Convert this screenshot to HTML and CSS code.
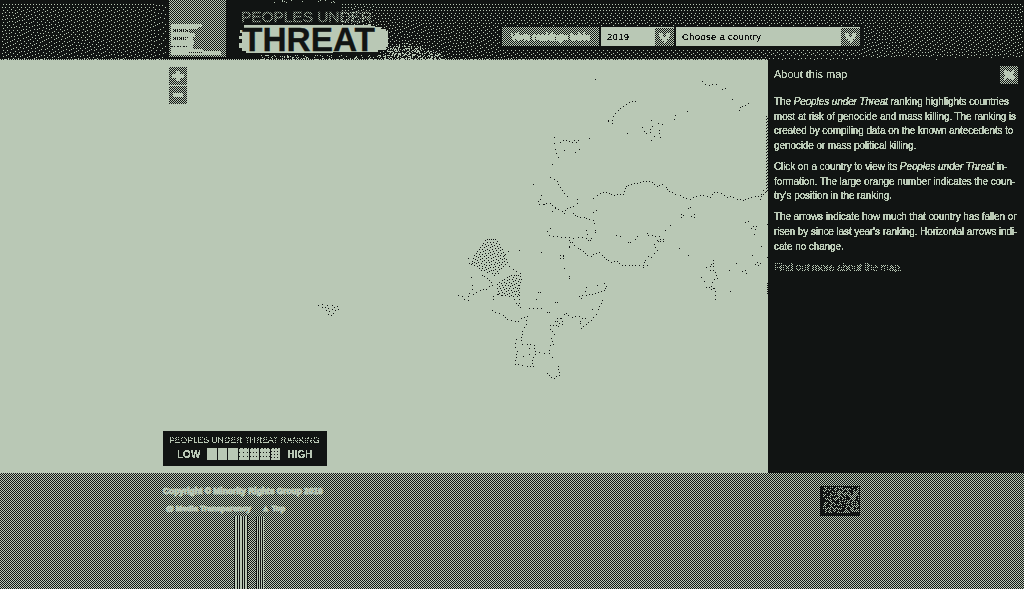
FILE: index.html
```html
<!DOCTYPE html>
<html lang="en">
<head>
<meta charset="utf-8">
<title>Peoples under Threat</title>
<link rel="stylesheet" href="styles.css">
</head>
<body>
<svg class="defs" width="0" height="0" aria-hidden="true">
  <filter id="onebit" x="0" y="0" width="100%" height="100%" color-interpolation-filters="sRGB">
    <feComponentTransfer><feFuncA type="discrete" tableValues="0 0 1 1 1"/></feComponentTransfer>
  </filter>
</svg>
<header class="header">
  <svg class="texture" width="1024" height="60" viewBox="0 0 1024 60" shape-rendering="crispEdges"><path id="grain" class="paper"/></svg>
  <div class="mrg">
    <svg width="57" height="57" viewBox="0 0 57 57" shape-rendering="crispEdges">
      <path class="paper" d="M2 24h31v3h-4v2H2zM2 33h24v4H2zM2 41h23v4H2zM2 49h32v2h18v4H2z"/>
      <path class="paper" d="M2 29h18v4H2zM2 37h22v4H2zM2 45h22v4H2z"/>
      <path class="inkline" d="M4 29.500h14M4 31.500h18M4 37.500h16M4 39.500h14M20 52.500h14" stroke-dasharray="1 1"/>
      <path class="inkline" d="M5 30.500h14M5 38.500h12M2 46.500h16" stroke-dasharray="2 1 1 2"/>
    </svg>
  </div>
  <div class="brand">
    <svg width="225" height="60" viewBox="0 0 225 60">
      <g id="spray"></g>
      <g class="sparse"><text class="peoples" x="15" y="22" textLength="131" lengthAdjust="spacing">PEOPLES UNDER</text></g>
      <path class="paper" shape-rendering="crispEdges" d="M18 25h124v-1h3v2h4v1h6v2h5v2h2v16h-2v3h-8v2h-45v1H20v-2h-4v-3h-3v-5h3v-4h-3v-3h3v-3h-2v-3h4z"/>
      <text class="threat" x="16" y="51" textLength="133" lengthAdjust="spacingAndGlyphs">THREAT</text>
    </svg>
  </div>
  <div class="tools">
    <div class="view"><span class="bit">View rankings table</span></div>
    <div class="select year"><span class="bit">2019</span><svg class="arrow" width="19" height="18" viewBox="0 0 19 18"><path class="paper" shape-rendering="crispEdges" d="M4 5h3v1h1v2h1v1h1V8h1V6h1V5h3v4h-1v2h-2v2h-1v2H9v-2H7v-2H5V9H4z"/></svg></div>
    <div class="select country"><span class="bit">Choose a country</span><svg class="arrow" width="19" height="18" viewBox="0 0 19 18"><path class="paper" shape-rendering="crispEdges" d="M4 5h3v1h1v2h1v1h1V8h1V6h1V5h3v4h-1v2h-2v2h-1v2H9v-2H7v-2H5V9H4z"/></svg></div>
  </div>
</header>
<main class="main">
  <section class="map">
    <svg id="land" class="land" width="768" height="413" viewBox="0 60 768 413" shape-rendering="crispEdges"></svg>
    <div class="zoom">
      <button class="zbtn" aria-label="Zoom in"><svg width="18" height="18" viewBox="0 0 18 18" shape-rendering="crispEdges"><path class="paper" d="M7 4h4v3h4v4h-4v3H7v-3H3V7h4z"/></svg></button>
      <button class="zbtn" aria-label="Zoom out"><svg width="18" height="18" viewBox="0 0 18 18" shape-rendering="crispEdges"><path class="paper" d="M4 7h10v4H4z"/></svg></button>
    </div>
    <div class="legend">
      <div class="legend-title"><span class="bit">PEOPLES UNDER THREAT RANKING</span></div>
      <div class="scale"><span class="bit">LOW</span><div class="ramp"><i class="r1"></i><i class="r2"></i><i class="r3"></i><i class="r4"></i><i class="r5"></i><i class="r6"></i><i class="r7"></i></div><span class="bit">HIGH</span></div>
    </div>
  </section>
  <aside class="about">
    <div class="about-head"><h2 class="bit">About this map</h2><button class="close" aria-label="Close"><svg width="18" height="18" viewBox="0 0 18 18" shape-rendering="crispEdges"><path class="paper" d="M4 4h3v1h2v1h2V5h1V4h2v3h-1v2h1v2h1v2h-1v1h-3v-1H9v-1H7v1H6v1H4v-3h1V9H4z"/></svg></button></div>
    <p class="bit">The <em>Peoples under Threat</em> ranking highlights countries<br>most at risk of genocide and mass killing. The ranking is<br>created by compiling data on the known antecedents to<br>genocide or mass political killing.</p>
    <p class="bit">Click on a country to view its <em>Peoples under Threat</em> in-<br>formation. The large orange number indicates the coun-<br>try's position in the ranking.</p>
    <p class="bit">The arrows indicate how much that country has fallen or<br>risen by since last year's ranking. Horizontal arrows indi-<br>cate no change.</p>
    <p class="bit sparse"><a>Find out more about the map.</a></p>
  </aside>
</main>
<footer class="footer">
  <div class="credits">
    <div class="copy">Copyright © Minority Rights Group 2019</div>
    <div class="links"><span>@ Media Transparency</span><span>▲ Top</span></div>
    <div class="bands"><i class="band wide"></i><i class="band narrow"></i></div>
  </div>
  <svg class="partner" width="40" height="30" viewBox="0 0 40 30" shape-rendering="crispEdges"><rect class="ink" width="40" height="30"/><path id="noise" class="paper"/></svg>
</footer>
<script src="map.js"></script>
</body>
</html>
```
FILE: styles.css
```css
:root { --ink: #111413; --paper: #b9c8b5; --check: repeating-conic-gradient(var(--ink) 0 25%, var(--paper) 0 50%) 0 0 / 2px 2px; }
* { box-sizing: border-box; }
body { margin: 0; width: 1024px; height: 589px; overflow: hidden; display: flex; flex-direction: column; background: var(--ink); color: var(--paper); font: 10px "Liberation Sans", Arial, sans-serif; }
.defs { position: absolute; }
.ink { fill: var(--ink); }
.paper { fill: var(--paper); }
.inkline { stroke: var(--ink); fill: none; }
.bit { filter: url(#onebit); }
.sparse { -webkit-mask: repeating-conic-gradient(#000 0 25%, transparent 0 50%) 0 0 / 2px 2px; mask: repeating-conic-gradient(#000 0 25%, transparent 0 50%) 0 0 / 2px 2px; }
svg { display: block; }
button { border: 0; padding: 0; }
.header { height: 60px; display: flex; padding-left: 169px; position: relative; }
.texture { position: absolute; left: 0; top: 0; }
.mrg, .brand, .tools { position: relative; }
.mrg { width: 57px; height: 57px; background: var(--check); }
.brand { width: 225px; height: 60px; }
.peoples { font-size: 15.500px; fill: var(--paper); stroke: var(--paper); stroke-width: .4; }
.threat { font-size: 33px; font-weight: bold; fill: var(--ink); stroke: var(--ink); stroke-width: .3; }
.tools { display: flex; align-items: center; margin: 27px 0 0 51px; height: 19px; gap: 2px; }
.view { width: 97px; height: 19px; background: var(--check); font-size: 8.500px; font-weight: bold; display: flex; align-items: center; justify-content: center; white-space: nowrap; -webkit-text-stroke: 1px var(--paper); }
.select { height: 19px; background: var(--paper); color: var(--ink); display: flex; align-items: center; justify-content: space-between; padding-left: 6px; font-size: 9.500px; letter-spacing: .3px; }
.year { width: 73px; }
.country { width: 184px; }
.arrow { background: var(--check); }
.main { height: 413px; display: flex; }
.map { width: 768px; position: relative; background: var(--paper); }
.land { position: absolute; left: 0; top: 0; }
.zoom { position: absolute; left: 169px; top: 7px; display: flex; flex-direction: column; gap: 1px; }
.zbtn, .close { width: 18px; height: 18px; background: var(--check); }
.legend { position: absolute; left: 163px; top: 371px; width: 164px; height: 35px; background: var(--ink); padding: 4px 6px; }
.legend-title { font-size: 8.500px; line-height: 10px; white-space: nowrap; letter-spacing: .07px; }
.legend-title span { -webkit-mask: repeating-conic-gradient(#000 0 25%, #000 0 50%, transparent 0 75%, #000 0) 0 0 / 2px 2px; mask: conic-gradient(#000 75%, transparent 0) 0 0 / 2px 2px; }
.scale { display: flex; align-items: center; height: 18px; padding-left: 8px; gap: 7px; font-weight: bold; }
.ramp { display: flex; width: 73px; height: 12px; gap: 1px; }
.ramp i { flex: 1; background: var(--paper); }
.ramp .r4 { background: conic-gradient(from 270deg at 1px 1px, var(--ink) 25%, var(--paper) 0) 0 0 / 4px 4px; }
.ramp .r5, .ramp .r6 { background: conic-gradient(from 270deg at 1px 1px, var(--ink) 25%, var(--paper) 0) 0 0 / 3px 4px; }
.ramp .r7 { background: conic-gradient(from 270deg at 1px 1px, var(--ink) 25%, var(--paper) 0) 0 0 / 3px 3px; }
.about { width: 256px; padding: 6px 6px 0; line-height: 14.700px; }
.about-head { display: flex; justify-content: space-between; height: 29px; }
h2 { font-size: 11px; font-weight: normal; margin: 1px 0 0; }
p { margin: 0 0 6.200px; font-size: 10px; white-space: nowrap; letter-spacing: -.1px; -webkit-text-stroke: .2px var(--paper); }
.footer { height: 116px; background: var(--check); display: flex; justify-content: space-between; padding: 0 164px 0 163px; }
.credits { padding-top: 12px; font-size: 8.400px; font-weight: bold; line-height: 12px; white-space: nowrap; -webkit-text-stroke: 1px var(--paper); }
.links { display: flex; gap: 11px; padding: 6px 0 0 3px; font-size: 7.800px; }
.bands { display: flex; gap: 8px; padding-left: 71px; margin-top: 1px; }
.band { height: 74px; background: repeating-linear-gradient(90deg, var(--ink) 0 1px, var(--paper) 1px 2px); }
.wide { width: 14px; background: repeating-linear-gradient(90deg, var(--ink) 0 1px, var(--paper) 1px 3px, var(--ink) 3px 4px, var(--paper) 4px 5px); }
.narrow { width: 8px; background: repeating-linear-gradient(90deg, var(--ink) 0 1px, var(--paper) 1px 2px, var(--ink) 2px 3px, var(--paper) 3px 4px); }
.partner { margin-top: 13px; }
```
FILE: map.js
```js
const NS = "http://www.w3.org/2000/svg";
function dot(parent, x, y, cls) {
  const r = document.createElementNS(NS, "rect");
  r.setAttribute("x", Math.floor(x)); r.setAttribute("y", Math.floor(y));
  r.setAttribute("width", 1); r.setAttribute("height", 1); r.setAttribute("class", cls);
  parent.appendChild(r);
}
const land = document.getElementById("land");
function line(ox, oy, s, step) {
  const n = s.trim().split(/\s+/).map(Number);
  let last = null;
  for (let i = 0; i < n.length; i += 2) {
    const p = [ox + n[i] / 3, oy + n[i + 1] / 3];
    if (last) {
      const d = Math.hypot(p[0] - last[0], p[1] - last[1]), k = Math.max(1, Math.round(d / step));
      for (let j = 1; j < k; j++) dot(land, last[0] + (p[0] - last[0]) * j / k, last[1] + (p[1] - last[1]) * j / k, "ink");
    }
    dot(land, p[0], p[1], "ink");
    last = p;
  }
}
function points(ox, oy, s) {
  const n = s.trim().split(/\s+/).map(Number);
  for (let i = 0; i < n.length; i += 2) dot(land, ox + n[i] / 3, oy + n[i + 1] / 3, "ink");
}
[
  "190 384 202 376 220 367 238 370 253 376 280 373 289 349 304 343 322 340 340 334 358 334 382 349 397 343 409 351 418 364 436 373 451 376 460 382 481 388 499 379 511 376 541 382 553 367 562 367 574 370 592 382 601 379 622 388 640 391 655 385 676 379 694 379 706 367",
  "316 94 298 97 280 109 265 121 250 139", "517 34 526 43 538 46 559 43", "577 58 586 55",
  "628 121 631 112 646 106 655 100", "91 217 100 211 118 214 127 217 133 211 139 217 145 211",
  "61 322 73 328 82 334 91 351 103 370 112 379", "28 403 61 400 76 412 97 424 103 430 112 415 130 409 142 400 142 388",
  "130 430 136 436 151 442 163 442 178 448 190 451 193 460", "58 496 70 499 95 502 118 502 130 505 145 502 169 505 184 505",
  "118 529 133 526 145 535 160 544 172 556 184 559 199 550 208 547 217 556 229 568 244 577 262 574 277 586 328 586 340 592 352 586",
  "340 586 346 571 355 559 364 562 373 550 382 541 373 523 382 511 400 508", "355 496 388 499 400 508"
].forEach(s => line(530, 70, s, 3.4));
points(530, 70, "196 28 235 151 235 154 247 151 247 160 292 190 337 172 343 184 349 190 361 187 361 178 367 169 364 151 385 160 397 163 388 181 388 190 391 202 373 199 364 211 433 148 436 136 472 124 607 88 178 205 73 202 73 220 76 238 79 250 85 262 67 283 103 241 136 247 148 238 10 343 34 376 31 388 25 394 43 403 67 424 76 415 190 427 199 421 196 481 196 487 169 481 172 493 181 511 175 511 61 475 52 484 118 511 121 517 127 517 118 532 91 556 100 556 91 565 100 565 34 547 103 595 118 619 118 625 169 652 202 646 223 640 229 649 226 655 259 496 271 499 295 517 301 517 316 508 322 499 352 490 406 481 421 466 454 433 460 436 454 442 475 415 481 412 484 439 493 433 493 442 448 535 475 556 385 514 391 514 400 514 646 457 655 454 664 475 670 469 679 469 676 478 673 493 694 529 667 556 676 583 682 577 691 580 685 586 637 604 646 601 649 610 598 601 550 571 544 583 550 580 550 589 541 589 529 592 541 601 550 601 556 607 559 616 562 625 553 628 547 637 523 634 514 622 538 652 529 652 544 649 553 655 694 373 700 361 691 388 712 463 712 562");
points(530, 70, "550 655 555 665 555 677 557 689 545 659 600 664 620 580");
for (let y = 116; y < 193; y++) if (y % 3) dot(land, y % 3 === 1 ? 767 : 766, y, "ink");
for (let y = 283; y < 294; y += 2) dot(land, 767, y, "ink");
[
  "157 271 166 277 190 286 202 298 226 304 235 304 244 295 262 289 259 313 247 334 244 361 229 358 226 382 232 394 229 412 226 433 247 436 262 439 280 439 277 421 286 403 283 376 262 373 247 373",
  "298 397 313 400 328 400", "331 376 340 373 334 355 343 343 331 328 331 316 349 316 367 304 364 295 373 283 379 280 385 286 397 292 418 289 427 295 436 295",
  "352 295 352 304 355 319 367 313", "421 310 424 325 439 313 454 301 469 283 475 268 484 250 487 241",
  "418 229 439 226 457 223 475 217 493 211 499 199", "322 460 334 472 343 475 358 466 358 457 355 439",
  "55 226 67 229 73 238 85 241 88 220 100 223 121 211 139 208 148 199 157 196 154 187 142 175 127 166", "268 265 304 265",
  "241 160 244 178 238 196 238 238 241 262", "193 106 208 139 220 148 241 160", "160 238 160 229 175 223 208 229 220 229 229 250 241 262"
].forEach(s => line(440, 220, s, 3.6));
points(440, 220, "85 115 88 130 97 130 94 172 97 196 97 208 205 94 238 91 304 97 361 106 370 109 361 115 370 115 373 145 388 169 388 175 295 217 301 217 289 238 346 247 352 247 322 277 328 277 268 385 268 403 250 409 337 412 328 391 424 235 436 214 439 202 472 196 493 190 457 268 421 304 346 304 361 295");

/* Error diffusion of a tone function; calls plot for every lit pixel. */
function diffuse(x0, y0, x1, y1, tone, plot) {
  const w = x1 - x0;
  let row = new Float32Array(w + 2), next = new Float32Array(w + 2);
  for (let y = y0; y < y1; y++) {
    for (let i = 1; i <= w; i++) {
      const t = tone(x0 + i - 1, y);
      if (t <= 0) continue;
      const v = t + row[i], on = v > .5, e = v - (on ? 1 : 0);
      if (on) plot(x0 + i - 1, y);
      row[i + 1] += e * 7 / 16; next[i - 1] += e * 3 / 16; next[i] += e * 5 / 16; next[i + 1] += e / 16;
    }
    row = next; next = new Float32Array(w + 2);
  }
}
const inside = (poly, x, y) => {
  let c = false;
  for (let i = 0, j = poly.length - 1; i < poly.length; j = i++)
    if ((poly[i][1] > y) !== (poly[j][1] > y) && x < (poly[j][0] - poly[i][0]) * (y - poly[i][1]) / (poly[j][1] - poly[i][1]) + poly[i][0]) c = !c;
  return c;
};
const west = [[485, 237], [496, 236], [506, 252], [507, 266], [495, 276], [480, 271], [469, 264], [472, 254]];
const south = [[495, 282], [510, 273], [519, 272], [520, 297], [496, 295]];
diffuse(460, 225, 530, 300, (x, y) => inside(west, x, y) || inside(south, x, y) ? .14 : 0, (x, y) => dot(land, x, y, "ink"));
points(300, 290, "55 46 67 43 67 52 76 52 79 61 82 46 85 55 88 64 85 73 94 76 97 58 97 46 103 52 106 61 100 70 112 49 115 58");

let grain = "";
diffuse(0, 0, 1024, 60, (x, y) => {
  if (y < 2) return .03;
  if (x < 167) return x > 155 ? .07 : .1;
  if (x < 340) return 0;
  if (x < 378) return y < 26 ? .11 : 0;
  if (x > 500 && x < 862 && y > 25 && y < 48) return 0;
  return x > 768 && y > 56 ? .05 : .105;
}, (x, y) => { grain += `M${x} ${y}h1v1h-1z`; });
for (let x = 0; x < 768; x += 2) grain += `M${x} 59h1v1h-1z`;
document.getElementById("grain").setAttribute("d", grain);

let seed = 7;
const rand = () => (seed = (seed * 16807) % 2147483647) / 2147483647;
const spray = document.getElementById("spray");
for (let y = 42; y < 60; y++) for (let x = 158; x < 218; x++) {
  if (y > 42 + Math.abs(x - 180) / 3 && rand() < .3) dot(spray, x, y, "paper");
}
for (let x = 30; x < 162; x++) for (let y = 55; y < 60; y++) if (rand() < .14) dot(spray, x, y, "paper");
for (let x = 48; x < 120; x++) for (let y = 0; y < 3; y++) if (rand() < .07) dot(spray, x, y, "paper");
let noise = "";
for (let x = 3; x < 38; x += 2) for (let y = 1; y < 27; y++) if (rand() < .6) noise += `M${x + y % 2} ${y}h1v1h-1z`;
document.getElementById("noise").setAttribute("d", noise);
```
